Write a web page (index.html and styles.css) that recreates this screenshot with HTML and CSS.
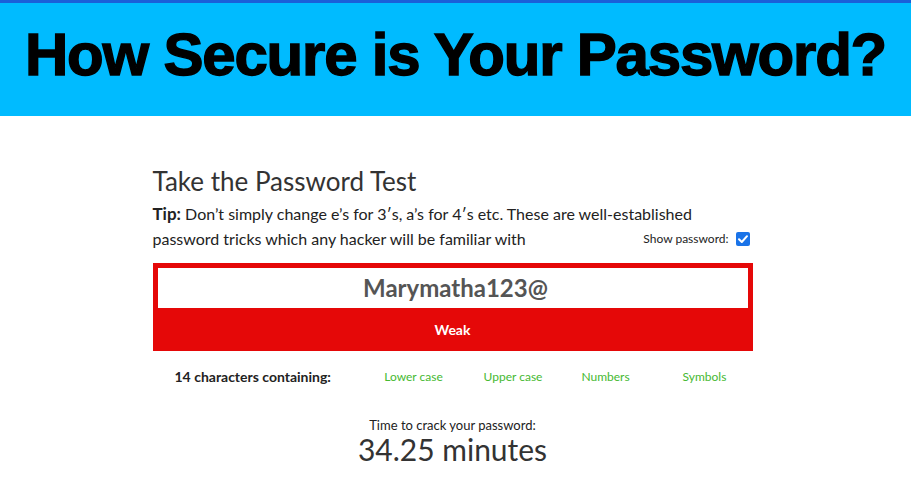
FILE: index.html
```html
<!DOCTYPE html>
<html>
<head>
<meta charset="utf-8">
<link rel="stylesheet" href="styles.css">
</head>
<body>
<header class="banner">
  <h1 class="banner-title">How Secure is Your Password?</h1>
</header>
<main class="content">
  <h2 class="test-title">Take the Password Test</h2>
  <div class="tip">
    <div class="tip-line"><strong>Tip:</strong> Don’t simply change e’s for 3′s, a’s for 4′s etc. These are well-established</div>
    <div class="tip-line tip-last">
      <span>password tricks which any hacker will be familiar with</span>
      <label class="show-pw">Show password: <span class="checkbox"><svg viewBox="0 0 14 14" width="14" height="14"><path d="M3 7.2 L5.8 10 L11 4.2" fill="none" stroke="#fff" stroke-width="2" stroke-linecap="round" stroke-linejoin="round"/></svg></span></label>
    </div>
  </div>
  <div class="meter">
    <div class="pw-input">Marymatha123@</div>
    <div class="strength">Weak</div>
  </div>
  <div class="criteria">
    <span class="count">14 characters containing:</span>
    <span class="crit">Lower case</span>
    <span class="crit">Upper case</span>
    <span class="crit">Numbers</span>
    <span class="crit">Symbols</span>
  </div>
  <div class="crack">
    <div class="crack-label">Time to crack your password:</div>
    <div class="crack-time">34.25 minutes</div>
  </div>
</main>
</body>
</html>
```
FILE: styles.css
```css
* { box-sizing: border-box; }
body {
  margin: 0;
  font-family: Lato, "Open Sans", sans-serif;
  color: #333;
  background: #fff;
}
.banner {
  background: #00bbff;
  border-top: 3px solid #1a5fd9;
  height: 116px;
  display: flex;
  justify-content: center;
  padding-top: 22px;
}
.banner-title {
  margin: 0;
  font-family: "Liberation Sans", Arial, sans-serif;
  font-weight: 700;
  font-size: 60px;
  line-height: 60px;
  letter-spacing: -1.2px;
  color: #000;
  -webkit-text-stroke: 1.4px #000;
  white-space: nowrap;
}
.content {
  width: 606px;
  padding-right: 6px;
  margin: 0 auto;
  padding-top: 49px;
}
.test-title {
  margin: 0;
  font-weight: 400;
  font-size: 26px;
  line-height: 32px;
  color: #333;
}
.tip {
  margin-top: 4px;
  font-size: 16px;
  line-height: 25px;
  color: #222;
}
.tip strong { font-size: 17px; font-weight: 700; }
.tip-last {
  display: flex;
  justify-content: space-between;
  align-items: center;
}
.show-pw {
  font-size: 12px;
  color: #222;
  display: flex;
  align-items: center;
  gap: 7px;
  margin-right: 3px;
}
.checkbox {
  width: 14px;
  height: 14px;
  border-radius: 2px;
  background: #1a73e8;
  display: inline-flex;
}
.meter {
  margin-top: 12px;
  background: #e50808;
  padding: 5px 5px 0;
  height: 88px;
}
.pw-input {
  background: #fff;
  height: 40px;
  padding-left: 6px;
  text-align: center;
  font-weight: 700;
  font-size: 24px;
  line-height: 40px;
  color: #555;
}
.strength {
  height: 43px;
  line-height: 43px;
  text-align: center;
  color: #fff;
  font-weight: 700;
  font-size: 14px;
}
.criteria {
  display: grid;
  grid-template-columns: 189px 100px 99px 86px 112px;
  align-items: center;
  margin-top: 17px;
  padding-left: 22px;
  height: 16px;
}
.count {
  font-weight: 700;
  font-size: 14px;
  color: #222;
}
.crit {
  font-size: 12px;
  color: #46b932;
  text-align: center;
}
.crack {
  text-align: center;
  margin-top: 34px;
}
.crack-label {
  font-size: 13px;
  line-height: 14px;
  color: #222;
}
.crack-time {
  font-size: 30px;
  line-height: 30px;
  margin-top: 2px;
  color: #333;
}
```
